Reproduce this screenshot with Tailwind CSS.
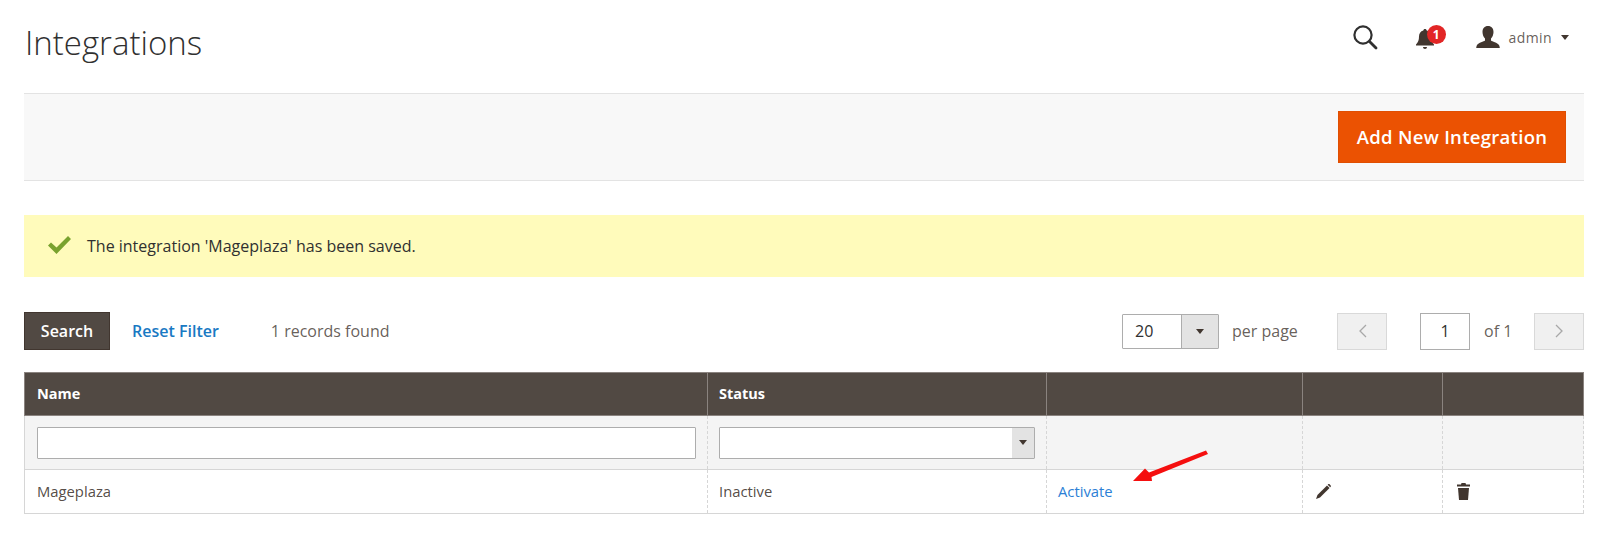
<!DOCTYPE html>
<html lang="en">
<head>
  <meta charset="UTF-8" />
  <title>Integrations</title>
  <script src="https://cdn.jsdelivr.net/npm/@tailwindcss/browser@4"></script>
</head>
<body class="bg-white h-[554px] overflow-hidden font-['Open_Sans',sans-serif] text-[#41362f]">
  <div class="pl-[24px] pr-[16px]">

    <!-- Page header -->
    <header class="h-[93px] flex items-start justify-between">
      <h1 class="mt-[20px] ml-px text-[33px] leading-[46px] font-light text-[#303030]">Integrations</h1>
      <div class="flex items-center mt-[24px] mr-[15px]">
        <svg class="w-[26px] h-[26px] mr-[38px]" viewBox="0 0 26 26" fill="none" stroke="#303030" stroke-width="2.2">
          <circle cx="11" cy="11" r="8.6" />
          <path d="M17.5 17.5 24 24" stroke-width="2.8" stroke-linecap="round" />
        </svg>
        <div class="relative w-[20px] h-[24px] mr-[40px]">
          <svg class="w-[18px] h-[20px] absolute left-0 top-[4px]" viewBox="0 0 18 20" fill="#41362f">
            <path d="M9 0c1 0 1.600.7 1.700 1.500C13.500 2.300 15 4.500 15 7.500c0 3.500.8 5.500 3 8v1H0v-1c2.200-2.500 3-4.500 3-8 0-3 1.500-5.200 4.300-6C7.400.7 8 0 9 0z" />
            <path d="M7 18h4c0 1.200-.9 2-2 2s-2-.8-2-2z" />
          </svg>
          <span class="absolute left-[11px] top-0 w-[19px] h-[19px] rounded-full bg-[#e22626] text-white text-[12px] leading-[19px] font-bold text-center">1</span>
        </div>
        <svg class="w-[24px] h-[22px] mr-[9px]" viewBox="0 0 24 22" fill="#41362f">
          <path d="M12 0c3.500 0 5.500 2.500 5.500 6 0 2.500-1 5-2.500 6.500v2c1 1 6.500 2 8 4.500.5.800.7 2 .8 3H.2c.1-1 .3-2.200.8-3 1.500-2.500 7-3.500 8-4.500v-2C7.500 11 6.500 8.500 6.500 6c0-3.500 2-6 5.500-6z" />
        </svg>
        <span class="text-[14px] tracking-[0.4px] text-[#41362f]/80">admin</span>
        <span class="ml-[9px] w-0 h-0 border-x-[4px] border-x-transparent border-t-[5px] border-t-[#41362f]"></span>
      </div>
    </header>

    <!-- Action bar -->
    <div class="h-[88px] bg-[#f8f8f8] border-y border-[#e3e3e3] flex items-center justify-end pr-[18px]">
      <button class="w-[228px] h-[52px] bg-[#eb5202] border border-[#e04f02] text-white text-[18.5px] font-semibold tracking-[0.3px]">Add New Integration</button>
    </div>

    <!-- Success message -->
    <div class="mt-[34px] h-[62px] bg-[#fffbbb] flex items-center pl-[24px]">
      <svg class="w-[23px] h-[18px] -mt-[3px]" viewBox="0 0 23 18" fill="#79a22e">
        <path d="M0 9.500 3 6.500 8.500 11.500 20 0 23 3 8.500 18z" />
      </svg>
      <span class="ml-[16px] text-[16px] text-[#303030]">The integration 'Mageplaza' has been saved.</span>
    </div>

    <!-- Grid toolbar -->
    <div class="mt-[35px] h-[38px] flex items-center text-[16px] text-[#41362f]/80">
      <button class="w-[86px] h-[38px] bg-[#514943] border border-[#41362f] text-white text-[16px] font-semibold">Search</button>
      <span class="ml-[22px] text-[#1979c3] text-[16px] font-semibold">Reset Filter</span>
      <span class="ml-[52px]">1 records found</span>
      <div class="ml-auto flex items-center">
        <div class="flex w-[97px] h-[35px] border border-[#adadad] rounded-[1px] text-[#303030]">
          <span class="w-[58px] pl-[12px] leading-[33px] bg-white">20</span>
          <span class="flex-1 bg-[#e3e3e3] border-l border-[#adadad] flex items-center justify-center">
            <span class="w-0 h-0 border-x-[4px] border-x-transparent border-t-[5px] border-t-[#41362f]"></span>
          </span>
        </div>
        <span class="ml-[13px] w-[105px]">per page</span>
        <span class="w-[50px] h-[37px] bg-[#f0f0f0] border border-[#d9d9d9] flex items-center justify-center">
          <svg class="w-[9px] h-[14px]" viewBox="0 0 9 14" fill="none" stroke="#a8a8a8" stroke-width="1.300"><path d="M8 1 2 7l6 6" /></svg>
        </span>
        <span class="ml-[33px] w-[50px] h-[37px] bg-white border border-[#adadad] text-center leading-[35px] text-[#303030]">1</span>
        <span class="ml-[14px] w-[50px]">of 1</span>
        <span class="w-[50px] h-[37px] bg-[#f0f0f0] border border-[#d9d9d9] flex items-center justify-center">
          <svg class="w-[9px] h-[14px]" viewBox="0 0 9 14" fill="none" stroke="#a8a8a8" stroke-width="1.300"><path d="M1 1l6 6-6 6" /></svg>
        </span>
      </div>
    </div>

    <!-- Data grid -->
    <div class="relative mt-[22px]">
      <table class="w-full table-fixed border-collapse text-[14.8px]">
        <colgroup>
          <col class="w-[683px]" /><col class="w-[339px]" /><col class="w-[256px]" /><col class="w-[140px]" /><col />
        </colgroup>
        <thead>
          <tr class="h-[43px] bg-[#514943] text-white text-left text-[14.5px]">
            <th class="pl-[12px] border border-[#8a837f] font-bold">Name</th>
            <th class="pl-[11px] border border-[#8a837f] font-bold">Status</th>
            <th class="border border-[#8a837f]"></th>
            <th class="border border-[#8a837f]"></th>
            <th class="border border-[#8a837f]"></th>
          </tr>
        </thead>
        <tbody>
          <tr class="h-[54px] bg-[#f4f4f4] border-b border-[#d6d6d6]">
            <td class="pl-[12px] pr-[11px] border-l border-[#d6d6d6]">
              <div class="h-[32px] bg-white border border-[#adadad] rounded-[1px]"></div>
            </td>
            <td class="pl-[11px] pr-[11px] border-l border-dashed border-[#d6d6d6]">
              <div class="h-[32px] flex bg-white border border-[#adadad] rounded-[1px]">
                <span class="ml-auto w-[22px] bg-[#e3e3e3] flex items-center justify-center">
                  <span class="w-0 h-0 border-x-[4px] border-x-transparent border-t-[5px] border-t-[#41362f]"></span>
                </span>
              </div>
            </td>
            <td class="border-l border-dashed border-[#d6d6d6]"></td>
            <td class="border-l border-dashed border-[#d6d6d6]"></td>
            <td class="border-l border-r border-dashed border-[#d6d6d6]"></td>
          </tr>
          <tr class="h-[44px] border-b border-[#d6d6d6] text-[#41362f]/90">
            <td class="pl-[12px] border-l border-[#d6d6d6]">Mageplaza</td>
            <td class="pl-[11px] border-l border-dashed border-[#d6d6d6]">Inactive</td>
            <td class="pl-[11px] border-l border-dashed border-[#d6d6d6] text-[#2c7fd6]">Activate</td>
            <td class="pl-[12px] border-l border-dashed border-[#d6d6d6]">
              <svg class="w-[17px] h-[17px] -mt-px" viewBox="0 0 16 16" fill="#41362f">
                <path d="M11.300 2.300 13.700 4.700 4.700 13.700 1 15 2.300 11.300z" />
                <path d="M12.200 1.400c.5-.5 1.200-.5 1.700 0l.7.7c.5.500.5 1.200 0 1.700l-.3.3-2.400-2.400z" />
              </svg>
            </td>
            <td class="pl-[14px] border-l border-r border-dashed border-[#d6d6d6]">
              <svg class="w-[13px] h-[17px] -mt-px" viewBox="0 0 13 17" fill="#41362f">
                <path d="M4.500 0h4l.5 1.500h4v2H0v-2h4z" />
                <path d="M1 5h11l-1 12H2z" />
              </svg>
            </td>
          </tr>
        </tbody>
      </table>

      <!-- Red annotation arrow -->
      <svg class="absolute left-[1101px] top-[73px] w-[90px] h-[40px]" viewBox="0 0 90 40" fill="#f50f0f">
        <path d="M8 36 20 23.500 24 27.500 81 5.500 83 9 26.500 32 27 36z" />
      </svg>
    </div>
  </div>
</body>
</html>
